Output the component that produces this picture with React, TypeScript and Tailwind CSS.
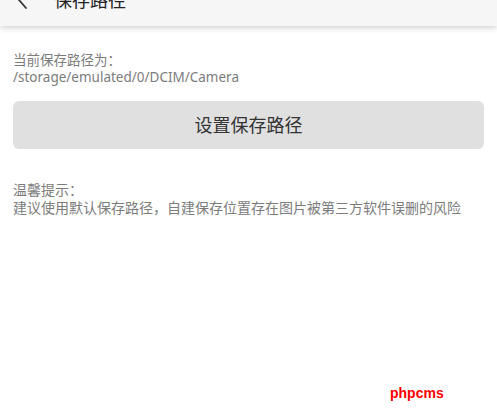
import React from "react";

export default function App() {
  const font = { fontFamily: '"Noto Sans", "Noto Sans CJK SC", Roboto, sans-serif' };
  return (
    <div className="relative w-[497px] h-[414px] bg-white overflow-hidden" style={font}>
      <div className="relative h-[26px] bg-[#f6f6f6] shadow-[0_2px_6px_rgba(0,0,0,0.18)] flex items-end">
        <svg className="absolute left-[16px] top-[-9px]" width="14" height="18" viewBox="0 0 14 18">
          <path d="M10 1 L3 9 L10 17" fill="none" stroke="#333" strokeWidth="1.8" strokeLinecap="round" strokeLinejoin="round" />
        </svg>
        <div className="absolute left-[54px] top-[-12px] text-[18px] leading-[24px] text-[#222]">保存路径</div>
      </div>
      <div className="px-[13px] pt-[26px]">
        <div className="text-[13.5px] leading-[17px] text-[#7c7c7c]">
          <div>当前保存路径为：</div>
          <div>/storage/emulated/0/DCIM/Camera</div>
        </div>
        <button className="mt-[15px] w-full h-[48px] rounded-[6px] bg-[#e0e0e0] text-[18px] text-[#333] flex items-center justify-center">
          设置保存路径
        </button>
        <div className="mt-[32px] text-[14px] leading-[18px] text-[#7c7c7c]">
          <div>温馨提示：</div>
          <div className="whitespace-nowrap">建议使用默认保存路径，自建保存位置存在图片被第三方软件误删的风险</div>
        </div>
      </div>
      <div
        className="absolute left-[390px] top-[384px] text-[14px] leading-[18px] font-bold text-[#ff0000]"
        style={{ fontFamily: '"Liberation Sans", Arial, sans-serif' }}
      >
        phpcms
      </div>
    </div>
  );
}
